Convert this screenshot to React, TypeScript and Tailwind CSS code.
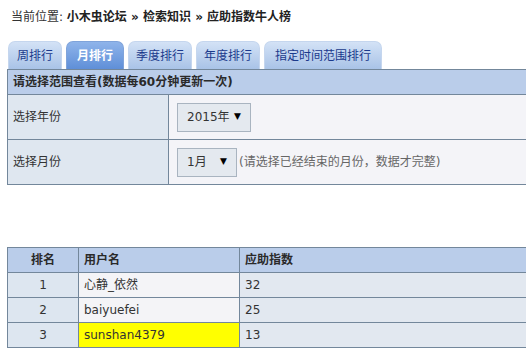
import React from "react";

const F = { fontFamily: '"DejaVu Sans", "Noto Sans CJK SC", sans-serif' };

function Tab({ label, active, w }: { label: string; active?: boolean; w: string }) {
  return (
    <div
      className={
        "h-[28px] rounded-t-[7px] flex items-center justify-center text-[12px] border border-b-0 " +
        w +
        (active
          ? " bg-gradient-to-b from-[#8fb4ea] to-[#5f8fd8] text-white font-bold border-[#7fa3da]"
          : " bg-gradient-to-b from-[#d3e2f6] to-[#a9c3e7] text-[#1b3a8c] border-[#c5d6ee]")
      }
    >
      {label}
    </div>
  );
}

function Select({ label, w }: { label: string; w: string }) {
  return (
    <div
      className={
        "h-[29px] border border-[#a9b4c0] bg-[#e4e9ef] flex items-center justify-between pl-[9px] pr-[9px] text-[12px] text-[#333] " +
        w
      }
    >
      <span>{label}</span>
      <span className="text-[9px] text-black">▼</span>
    </div>
  );
}

export default function App() {
  const rows = [
    { r: "1", n: "心静_依然", v: "32" },
    { r: "2", n: "baiyuefei", v: "25" },
    { r: "3", n: "sunshan4379", v: "13", hl: true },
  ];
  return (
    <div className="w-[526px] h-[348px] bg-white overflow-hidden text-[12px] text-[#333]" style={F}>
      <div className="h-[35px] pl-[11px] pt-[8px] text-[12px] text-[#333]">
        当前位置: <span className="font-bold text-[#222]">小木虫论坛 » 检索知识 » 应助指数牛人榜</span>
      </div>
      <div className="flex gap-[4px] pl-[8px] pt-[6px]">
        <Tab label="周排行" w="w-[54px]" />
        <Tab label="月排行" active w="w-[58px]" />
        <Tab label="季度排行" w="w-[64px]" />
        <Tab label="年度排行" w="w-[64px]" />
        <Tab label="指定时间范围排行" w="w-[118px]" />
      </div>
      <div className="ml-[7px] border-t border-l border-[#73879b]">
        <div className="h-[25px] bg-[#bacdea] flex items-center pl-[5px] font-bold text-[#2a2a2a] border-b border-[#73879b]">
          请选择范围查看(数据每60分钟更新一次)
        </div>
        <div className="flex h-[45px] border-b border-[#73879b]">
          <div className="w-[161px] bg-[#dfe7f0] border-r border-[#73879b] flex items-center pl-[5px]">选择年份</div>
          <div className="flex-1 bg-[#f4f4f8] flex items-center pl-[8px]">
            <Select label="2015年" w="w-[74px]" />
          </div>
        </div>
        <div className="flex h-[45px] border-b border-[#73879b]">
          <div className="w-[161px] bg-[#dfe7f0] border-r border-[#73879b] flex items-center pl-[5px]">选择月份</div>
          <div className="flex-1 bg-[#f4f4f8] flex items-center pl-[8px]">
            <Select label="1月" w="w-[60px]" />
            <span className="ml-[2px] text-[#666]">(请选择已经结束的月份，数据才完整)</span>
          </div>
        </div>
      </div>
      <div className="h-[62px]" />
      <div className="ml-[7px] border-t border-l border-[#73879b]">
        <div className="flex h-[25px] bg-[#bacdea] font-bold text-[#2a2a2a] border-b border-[#73879b]">
          <div className="w-[71px] border-r border-[#73879b] flex items-center justify-center">排名</div>
          <div className="w-[161px] border-r border-[#73879b] flex items-center pl-[5px]">用户名</div>
          <div className="flex-1 flex items-center pl-[5px]">应助指数</div>
        </div>
        {rows.map((r) => (
          <div key={r.r} className="flex h-[25px] border-b border-[#73879b]">
            <div className="w-[71px] bg-[#dde6f0] border-r border-[#73879b] flex items-center justify-center">{r.r}</div>
            <div className={"w-[161px] border-r border-[#73879b] flex items-center pl-[5px] " + (r.hl ? "bg-[#ffff00]" : "bg-[#f4f4f7]")}>{r.n}</div>
            <div className="flex-1 bg-[#e2e8f0] flex items-center pl-[5px]">{r.v}</div>
          </div>
        ))}
      </div>
    </div>
  );
}
